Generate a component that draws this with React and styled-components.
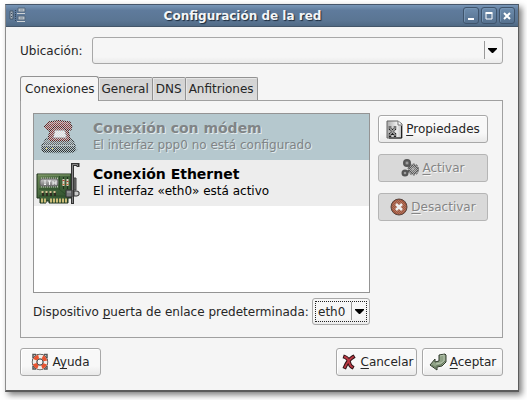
import React from "react";
import styled, { createGlobalStyle, css } from "styled-components";

const Global = createGlobalStyle`
  * { box-sizing: border-box; }
  body { margin: 0; background: #fff; color: #262626; font: 12px/16px "DejaVu Sans", sans-serif; }
  button, select { font: inherit; color: inherit; margin: 0; }
  u { text-underline-offset: 2px; text-decoration-skip-ink: none; text-decoration-thickness: 1px; }
`;

const Page = styled.div`padding: 4px 8px 8px 5px;`;

const Window = styled.main`
  border: 1px solid #888;
  border-color: #46566a #5c5c5c #5c5c5c #8c8c8c;
  border-bottom-width: 2px;
  background: #f5f5f5;
  box-shadow: 3px 3px 6px rgba(0, 0, 0, 0.5);
`;

const TitleBar = styled.header`
  display: grid;
  grid-template-columns: 17px 1fr 56px;
  align-items: center;
  height: 22px;
  padding: 0 3px;
  border-bottom: 1px solid #44566a;
  background: linear-gradient(#7896b7, #5f7b9c 25%, #5a7593 75%, #506a85);
`;

const Title = styled.h1`
  margin: 0;
  text-align: center;
  font-size: 12px;
  line-height: 20px;
  color: #f4f6f8;
  text-shadow: 1px 1px 1px #1c2a3a;
`;

const WindowControls = styled.div`
  display: flex;
  justify-content: flex-end;
  gap: 2px;
`;

const WindowButton = styled.button`
  display: flex;
  width: 16px;
  height: 17px;
  padding: 0;
  align-items: center;
  justify-content: center;
  border: 1px solid #3f546c;
  border-radius: 3px;
  background: linear-gradient(#6d8cad, #56718f);
  box-shadow: inset 1px 1px 0 #7694b3;
`;

const Body = styled.div`padding: 10px 15px 14px 14px;`;

const LocationRow = styled.div`
  display: flex;
  align-items: center;
  gap: 9px;
  margin-bottom: 12px;
`;

const SelectBox = styled.span`
  position: relative;
  display: flex;
  height: 27px;
  ${(p) => (p.$grow ? "flex: 1;" : "width: 58px;")}
`;

const Select = styled.select`
  appearance: none;
  width: 100%;
  padding: 0 20px 0 5px;
  border: 1px solid #a8a8a8;
  border-radius: 3px;
  background: linear-gradient(#f6f6f6 75%, #ebebeb);
  outline: ${(p) => (p.$focused ? "1px dotted #222" : "none")};
  outline-offset: -4px;
`;

const SelectArrow = styled.svg`
  position: absolute;
  top: 4px;
  right: 3px;
  pointer-events: none;
`;

const Tabs = styled.div`
  display: flex;
  align-items: flex-end;
  height: 24px;
`;

const Tab = styled.button`
  height: 23px;
  padding: 0 3px;
  border: 1px solid #929292;
  border-bottom: 0;
  border-left-width: 0;
  border-radius: 0 2px 0 0;
  background: linear-gradient(#d2d2d2, #dcdcdc);
  box-shadow: inset 1px 1px 0 #e6e6e6;
  ${(p) => p.$active && css`
    position: relative;
    height: 25px;
    margin-bottom: -1px;
    padding: 0 3px 1px 4px;
    border-left-width: 1px;
    border-radius: 3px 3px 0 0;
    background: #f5f5f5;
    box-shadow: none;
  `}
`;

const Panel = styled.section`
  padding: 12px 14px 12px 12px;
  border: 1px solid #a0a0a0;
`;

const Columns = styled.div`
  display: flex;
  gap: 8px;
`;

const ConnectionColumn = styled.div`
  flex: 1;
  display: flex;
  flex-direction: column;
  gap: 5px;
`;

const ConnectionList = styled.ul`
  min-height: 180px;
  margin: 0;
  padding: 0;
  list-style: none;
  border: 1px solid #949494;
  background: #fff;
`;

const Connection = styled.li`
  display: flex;
  height: 46px;
  padding-left: 1px;
  gap: 12px;
  background: ${(p) => (p.$selected ? "#b5c8ce" : "#ededed")};
  color: ${(p) => (p.$selected ? "#808486" : "#000")};
  text-shadow: ${(p) => (p.$selected ? "1px 1px 0 #e2eaec" : "none")};
`;

const ConnectionText = styled.div`padding-top: 5px;`;

const ConnectionName = styled.strong`
  display: block;
  font-size: 14px;
  line-height: 19px;
`;

const ConnectionStatus = styled.span`
  display: block;
  line-height: 15px;
`;

const GatewayRow = styled.div`
  display: flex;
  align-items: center;
  justify-content: space-between;
  white-space: nowrap;
`;

const Actions = styled.div`
  display: flex;
  flex-direction: column;
  gap: 11px;
  width: 110px;
  padding-top: 2px;
`;

const Button = styled.button`
  display: flex;
  align-items: center;
  justify-content: center;
  gap: 3px;
  height: 28px;
  min-width: 81px;
  padding: 0;
  white-space: nowrap;
  border: 1px solid #a8a8a8;
  border-radius: 3px;
  background: linear-gradient(#f8f8f8 65%, #e9e9e9);
  box-shadow: inset 1px 1px 0 #fff;
  &:disabled {
    color: #858585;
    border-color: #b5b5b5;
    background: #d9d9d9;
    box-shadow: none;
    text-shadow: 1px 1px 0 #f5f5f5;
  }
`;

const Footer = styled.footer`
  display: flex;
  justify-content: space-between;
  margin-top: 10px;
`;

const FooterGroup = styled.div`
  display: flex;
  gap: 5px;
`;

const Arrow = () => (
  <SelectArrow width="16" height="19" aria-hidden="true">
    <path d="M.5 0V18" stroke="#999" />
    <path d="M4 7h9v1l-4 4h-1L4 8z" fill="#000" />
  </SelectArrow>
);

const NetworkIcon = () => (
  <svg width="17" height="17" viewBox="0 0 17 17" aria-hidden="true">
    <path d="M4 8h3M6.500 3v11" stroke="#33475c" strokeDasharray="1 1" />
    <path d="M1 4h3v8H1z" fill="#aab4be" stroke="#46586a" />
    <path d="M2 6h1v1H2zM2 9h1v1H2z" fill="#3d4d5f" />
    <path d="M9 1h7v4H9zM9 9h7v4H9z" fill="#b9c1c8" stroke="#53677c" />
    <path d="M8 6.500h8M8 14.500h8" stroke="#cdd2d6" />
    <path d="M11 3h3M11 11h3" stroke="#7d8c9b" />
  </svg>
);

const PhoneIcon = () => (
  <svg width="46" height="46" viewBox="0 0 46 46" aria-hidden="true">
    <defs>
      <pattern id="phoneDots" width="2" height="2" patternUnits="userSpaceOnUse">
        <path d="M0 0h1v1H0zM1 1h1v1H1z" fill="#b5c8ce" />
      </pattern>
      <linearGradient id="phoneBase" x2="0" y2="1">
        <stop stopColor="#999" /><stop offset=".5" stopColor="#555" /><stop offset="1" stopColor="#2a2a2a" />
      </linearGradient>
    </defs>
    <ellipse cx="25" cy="36" rx="18" ry="4" fill="#8aa0a6" opacity=".6" />
    <path d="M11 25h26l3 6v6l-2 1H8l-1-1v-6z" fill="url(#phoneBase)" stroke="#222" />
    <path d="M8 31.500h31" stroke="#b0b0b0" />
    <path d="M11 34.500h2M16 34.500h2" stroke="#e3cb3b" />
    <path d="M17 10h14l2 6 2 9-2 2H15l-2-2 2-9z" fill="#963532" stroke="#42100e" />
    <path d="M13 8q11-3 22 0l2 5-1 3h-5l-2-3H19l-2 3h-5l-3-3z" fill="#963532" stroke="#42100e" />
    <path d="M14 9.500q10-3 20 0" fill="none" stroke="#c4716c" />
    <path d="M20 16h10l2 8H18z" fill="#f7f4f4" stroke="#8c5b59" />
    <path d="M5 5h38v36H5z" fill="url(#phoneDots)" />
    <path d="M20 17h9l1 6H19z" fill="#e7e7e8" opacity=".7" />
  </svg>
);

const EthernetIcon = () => (
  <svg width="46" height="46" viewBox="0 0 46 46" aria-hidden="true">
    <defs>
      <linearGradient id="boardGreen" x2="1" y2="1">
        <stop stopColor="#6e8a58" /><stop offset=".45" stopColor="#43653c" /><stop offset="1" stopColor="#2d4c2c" />
      </linearGradient>
      <linearGradient id="chipMetal" x2="0" y2="1">
        <stop stopColor="#c6c6c6" /><stop offset="1" stopColor="#777" />
      </linearGradient>
    </defs>
    <path d="M2 14h34v24h-3v5H14v-2h-3v2H5v-5H2z" fill="url(#boardGreen)" stroke="#1c301b" />
    <path d="M3 15h32" stroke="#86a06f" />
    <path d="M4 36h30M24.500 16v13M4 29h20l6 5" stroke="#2c4c28" fill="none" />
    <path d="M6 18.500h17M6 26.500h17" stroke="#bbc1b6" strokeWidth="2" strokeDasharray="1 1" />
    <rect x="5" y="19" width="18" height="7" rx="2" fill="url(#chipMetal)" stroke="#666" />
    <path d="M9 21h2M9 23h2M9 24.500h2M13 21h3M14.500 21v4M18 21v4M21 21v4M18 23h3" stroke="#f2f2f2" fill="none" />
    <path d="M28.500 17v12M32.500 17v12" stroke="#1f331e" />
    <path d="M28.500 19v7M32.500 19v7" stroke="#d9d2c0" strokeWidth="2" />
    <path d="M27.500 20.500h2M31.500 21.500h2" stroke="#a9402f" />
    <path d="M27.500 24.500h2M31.500 24.500h2" stroke="#c76b3b" />
    <path d="M8 32v4M12 32v4M16 32v4M20 32v4" stroke="#302d20" strokeWidth="2" />
    <path d="M6.500 32h2M10.500 32h2M14.500 32h2M18.500 32h2" stroke="#d6c294" strokeWidth="2" />
    <path d="M6 40.500h5M15 40.500h17" stroke="#cbbb78" strokeWidth="4" strokeDasharray="2 1" />
    <path d="M37.500 44V4.500h5.500V7" fill="none" stroke="#333" strokeWidth="3" />
    <path d="M37.500 43V4.500h5V6" fill="none" stroke="#858585" />
    <path d="M39 18h2v12h-2z" fill="#777" stroke="#404040" />
    <path d="M31 30h6v7h-6z" fill="#77797c" stroke="#303030" />
    <path d="M39 31h3l2 1v3l-2 1h-3z" fill="#c9c9c9" stroke="#303030" />
    <path d="M32 32h4" stroke="#a8a8a8" />
  </svg>
);

const PropertiesIcon = () => (
  <svg width="17" height="19" viewBox="0 0 17 19" aria-hidden="true">
    <defs><linearGradient id="sheet"><stop stopColor="#aaa" /><stop offset=".65" stopColor="#eee" /><stop offset="1" stopColor="#bbb" /></linearGradient></defs>
    <path d="M1 1h11l4 3v14H1z" fill="url(#sheet)" stroke="#656565" />
    <path d="M12 1v4h4" fill="#fff" stroke="#777" />
    <path d="M15.500 6v12H3" fill="none" stroke="#222" />
    <path d="M4 6v3l2 1v3l-2 1v3M9 6v3l-2 1v3l2 1v3" fill="none" stroke="#222" strokeWidth="2.400" />
    <path d="M4 6v3l2 1v3l-2 1v2M9 6v3l-2 1v3l2 1v2" fill="none" stroke="#eee" strokeWidth=".8" />
  </svg>
);

const GearsIcon = () => (
  <svg width="18" height="18" viewBox="0 0 18 18" aria-hidden="true">
    <defs>
      <pattern id="gearDots" width="2" height="2" patternUnits="userSpaceOnUse">
        <path d="M0 0h1v1H0zM1 1h1v1H1z" fill="#b0b0b0" />
      </pattern>
    </defs>
    <path d="M6 5l6 5-8 4" stroke="#555" fill="none" strokeWidth="2" />
    <g fill="#777" stroke="#555" strokeWidth="2">
      <circle cx="6" cy="4" r="3" /><circle cx="12.500" cy="10.500" r="4" /><circle cx="4" cy="14" r="2.500" />
    </g>
    <circle cx="12.500" cy="10.500" r="5.500" fill="none" stroke="#555" strokeDasharray="2 1.500" />
    <circle cx="12.500" cy="10.500" r="4.500" fill="url(#gearDots)" />
    <path d="M5 4h2M3 14h2M11 10h2" stroke="#c4c4c4" />
  </svg>
);

const StopIcon = () => (
  <svg width="18" height="18" viewBox="0 0 18 18" aria-hidden="true">
    <defs>
      <pattern id="stopDots" width="2" height="2" patternUnits="userSpaceOnUse"><path d="M0 0h1v1H0zM1 1h1v1H1z" fill="#bbb" /></pattern>
    </defs>
    <circle cx="9" cy="9" r="8" fill="#a45439" stroke="#574640" />
    <circle cx="9" cy="9" r="7" fill="url(#stopDots)" opacity=".35" />
    <path d="M6 6l6 6M12 6l-6 6" stroke="#eee" strokeWidth="2.500" />
  </svg>
);

const HelpIcon = () => (
  <svg width="18" height="18" viewBox="0 0 18 18" aria-hidden="true">
    <path d="M5 1.500H2V5M13 1.500h3V5M16 13v3h-3M5 16H2v-3" fill="none" stroke="#555" strokeWidth="1.500" />
    <circle cx="9" cy="9" r="5.500" fill="none" stroke="#404040" strokeWidth="5.500" />
    <circle cx="9" cy="9" r="5.500" fill="none" stroke="#f0eee9" strokeWidth="4" />
    <circle cx="9" cy="9" r="5.500" fill="none" stroke="#e8532f" strokeWidth="4" strokeDasharray="4.700 3.940" transform="rotate(20 9 9)" />
    <circle cx="9" cy="9" r="3" fill="#f4f4f4" stroke="#555" />
  </svg>
);

const CancelIcon = () => (
  <svg width="18" height="18" viewBox="0 0 18 18" aria-hidden="true">
    <path d="M5 4q3 1 4 5t3 5M13 4Q8 7 5 14" fill="none" stroke="#2e1214" strokeWidth="3.800" strokeLinecap="square" />
    <path d="M5 4q3 1 4 5t3 5M13 4Q8 7 5 14" fill="none" stroke="#bb3944" strokeWidth="1.900" strokeLinecap="square" />
  </svg>
);

const AcceptIcon = () => (
  <svg width="18" height="18" viewBox="0 0 18 18" aria-hidden="true">
    <path d="M10 2l6-1 1 1v7l-4 4-5 1v3l-7-5 5-6v3l4-1z" fill="#8fa286" stroke="#303b2c" />
    <path d="M11 3l4-1v6l-3 2-5 1" fill="none" stroke="#b5c3ad" />
    <path d="M3 12l4 3v-2l5-1 4-4" fill="none" stroke="#65785c" />
  </svg>
);

export default function App() {
  return (
    <>
      <Global />
      <Page>
        <Window>
          <TitleBar>
            <NetworkIcon />
            <Title>Configuración de la red</Title>
            <WindowControls>
              <WindowButton aria-label="Minimizar">
                <svg width="10" height="10"><path d="M2 8h6" stroke="#fff" strokeWidth="2" /></svg>
              </WindowButton>
              <WindowButton aria-label="Maximizar">
                <svg width="10" height="10"><path d="M2 2.500h6V8H2z" stroke="#fff" fill="none" /><path d="M1.500 2h7" stroke="#fff" strokeWidth="2" /></svg>
              </WindowButton>
              <WindowButton aria-label="Cerrar">
                <svg width="10" height="10"><path d="M2 2l6 6M8 2L2 8" stroke="#fff" strokeWidth="2" /></svg>
              </WindowButton>
            </WindowControls>
          </TitleBar>
          <Body>
            <LocationRow>
              <label htmlFor="location">Ubicación:</label>
              <SelectBox $grow>
                <Select id="location" defaultValue=""><option value=""></option></Select>
                <Arrow />
              </SelectBox>
            </LocationRow>
            <Tabs role="tablist">
              <Tab role="tab" aria-selected="true" $active>Conexiones</Tab>
              <Tab role="tab" aria-selected="false">General</Tab>
              <Tab role="tab" aria-selected="false">DNS</Tab>
              <Tab role="tab" aria-selected="false">Anfitriones</Tab>
            </Tabs>
            <Panel role="tabpanel">
              <Columns>
                <ConnectionColumn>
                  <ConnectionList>
                    <Connection $selected>
                      <PhoneIcon />
                      <ConnectionText>
                        <ConnectionName>Conexión con módem</ConnectionName>
                        <ConnectionStatus>El interfaz ppp0 no está configurado</ConnectionStatus>
                      </ConnectionText>
                    </Connection>
                    <Connection>
                      <EthernetIcon />
                      <ConnectionText>
                        <ConnectionName>Conexión Ethernet</ConnectionName>
                        <ConnectionStatus>El interfaz «eth0» está activo</ConnectionStatus>
                      </ConnectionText>
                    </Connection>
                  </ConnectionList>
                  <GatewayRow>
                    <label htmlFor="gateway">Dispositivo <u>p</u>uerta de enlace predeterminada:</label>
                    <SelectBox>
                      <Select id="gateway" defaultValue="eth0" $focused><option>eth0</option></Select>
                      <Arrow />
                    </SelectBox>
                  </GatewayRow>
                </ConnectionColumn>
                <Actions>
                  <Button><PropertiesIcon /><span><u>P</u>ropiedades</span></Button>
                  <Button disabled><GearsIcon /><span><u>A</u>ctivar</span></Button>
                  <Button disabled><StopIcon /><span><u>D</u>esactivar</span></Button>
                </Actions>
              </Columns>
            </Panel>
            <Footer>
              <Button><HelpIcon /><span>A<u>y</u>uda</span></Button>
              <FooterGroup>
                <Button><CancelIcon /><span><u>C</u>ancelar</span></Button>
                <Button><AcceptIcon /><span><u>A</u>ceptar</span></Button>
              </FooterGroup>
            </Footer>
          </Body>
        </Window>
      </Page>
    </>
  );
}
